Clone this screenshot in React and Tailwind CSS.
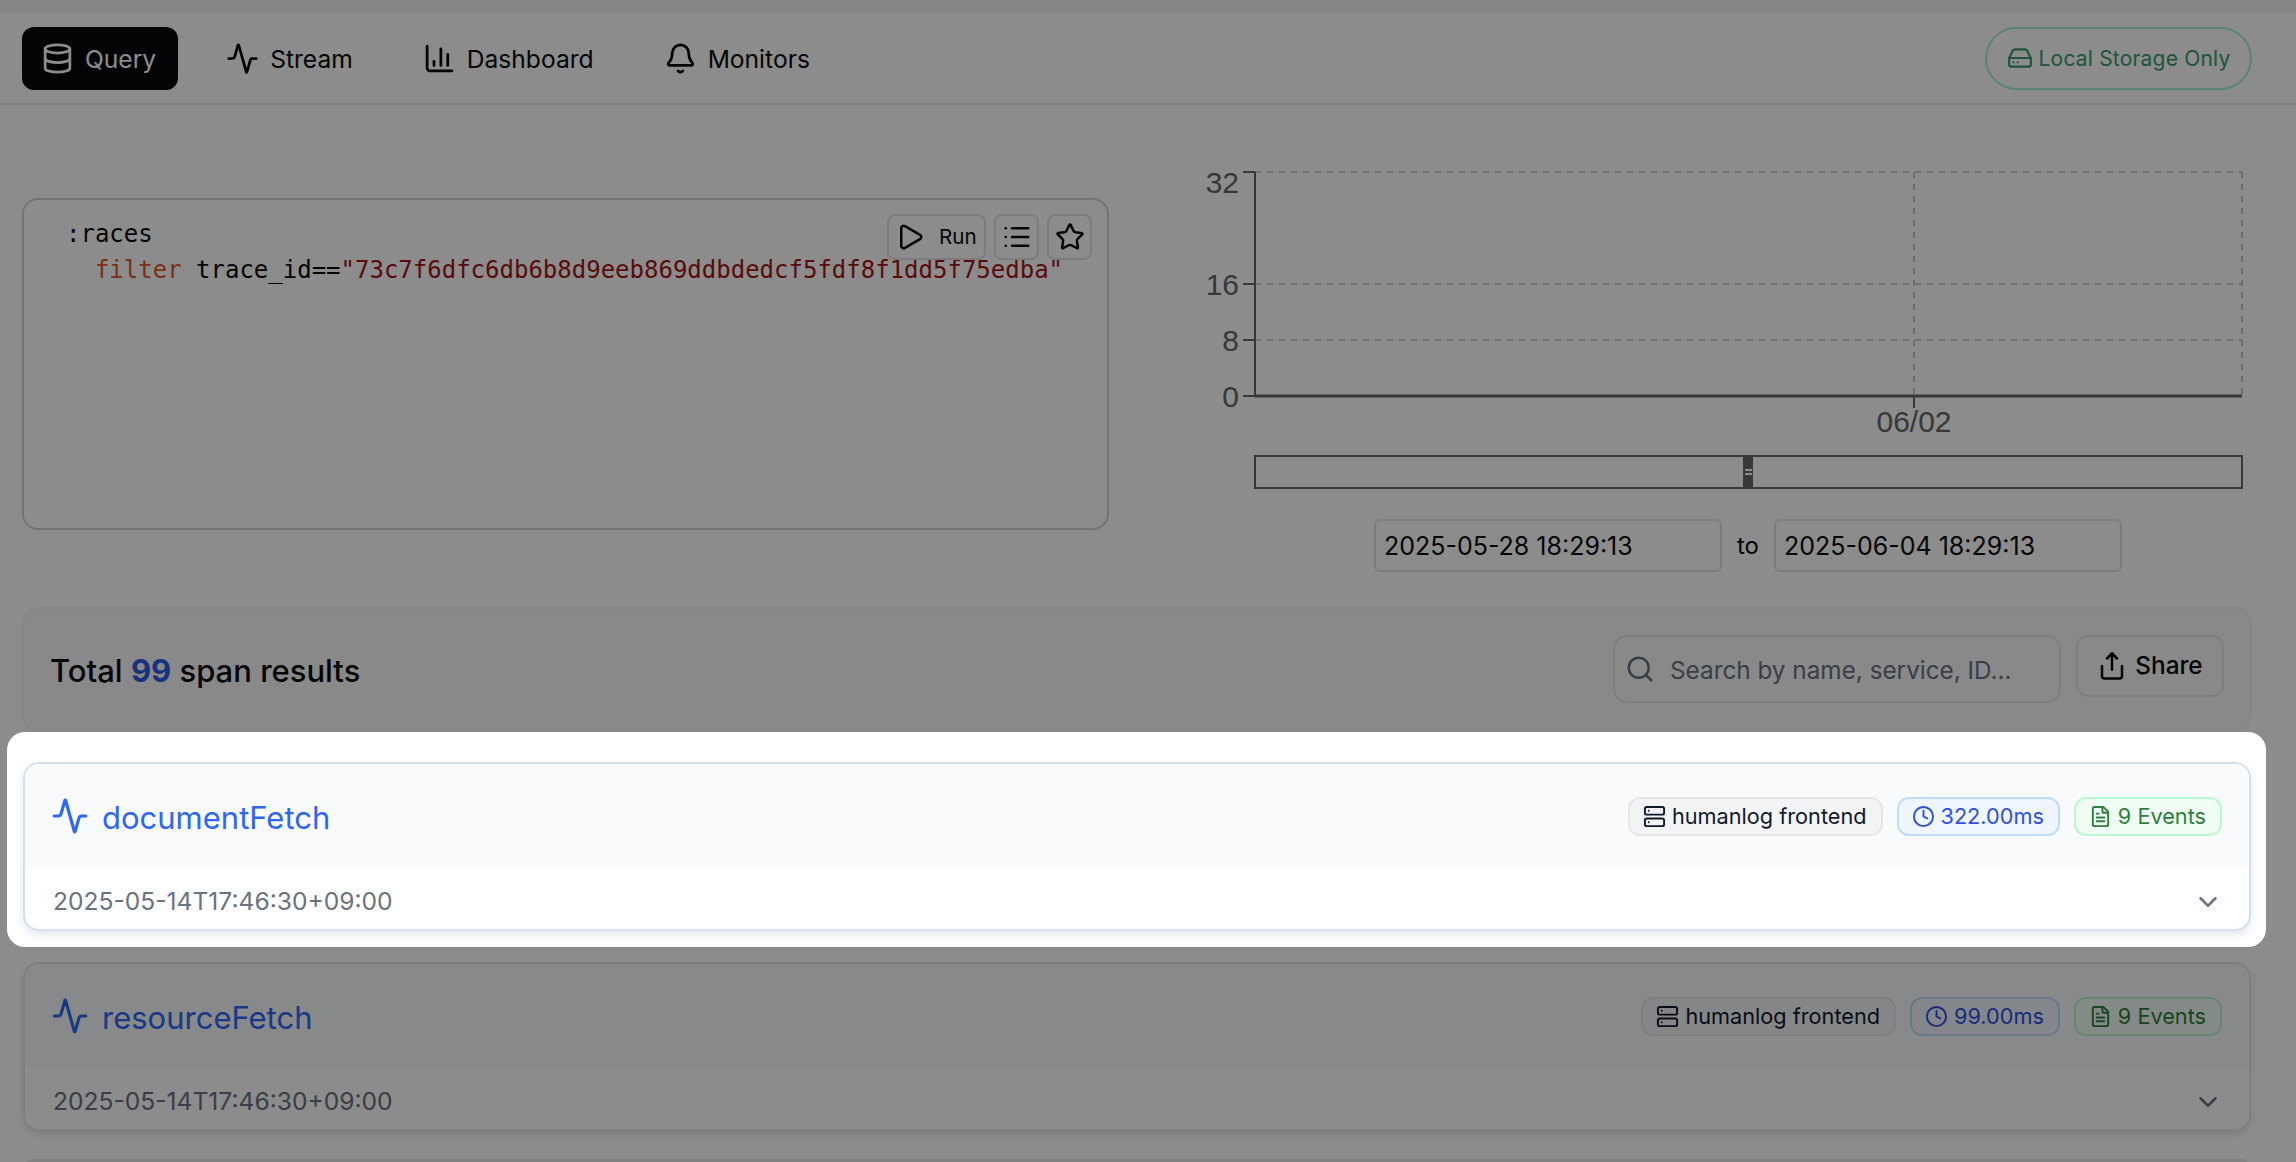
import React from 'react';
import {
  Activity, Bell, ChartColumn, ChevronDown, Clock, Database, FileText,
  HardDrive, List, Play, Search, Server, Share, Star
} from 'lucide-react';

const navItems = [
  { label: 'Query', icon: Database, active: true },
  { label: 'Stream', icon: Activity },
  { label: 'Dashboard', icon: ChartColumn },
  { label: 'Monitors', icon: Bell },
];

const Badge = ({ icon: Icon, className, children }) => (
  <span className={`flex h-[39px] items-center gap-[6px] rounded-[12px] border-2 pl-[13px] pr-[14px] text-[21.7px] ${className}`}>
    <Icon size={23} strokeWidth={2} />
    {children}
  </span>
);

const SpanCard = ({ name, duration, className = '' }) => (
  <div className={`overflow-hidden rounded-[16px] border-2 bg-white ${className}`}>
    <div className="flex h-[104px] items-center justify-between bg-[#f8fafc] pl-[26px] pr-[27px]">
      <div className="flex items-center gap-[13px] text-[#2f66f2]">
        <Activity size={38} strokeWidth={2} />
        <span className="pt-[2px] text-[31px] leading-none">{name}</span>
      </div>
      <div className="flex items-center gap-[14px]">
        <Badge icon={Server} className="border-[#e5e7eb] bg-[#f3f4f6] text-[#111827]">humanlog frontend</Badge>
        <Badge icon={Clock} className="border-[#bfdbfe] bg-[#eff6ff] text-[#2f4fe0]">{duration}</Badge>
        <Badge icon={FileText} className="border-[#bbf7d0] bg-[#f0fdf4] text-[#2f7d3c]">9 Events</Badge>
      </div>
    </div>
    <div className="flex h-[61px] items-center justify-between pl-[28px] pr-[26px] pt-[5px] text-[24.6px] text-[#6b7280]">
      <span>2025-05-14T17:46:30+09:00</span>
      <ChevronDown size={30} strokeWidth={2} className="mt-[2px]" />
    </div>
  </div>
);

const Chart = () => (
  <svg width="1096" height="342" viewBox="-10 0 1096 342" className="block font-['Liberation_Sans',sans-serif]">
    <g stroke="#cccccc" strokeWidth="2" strokeDasharray="6 6" fill="none">
      <line x1="45" y1="22" x2="1032" y2="22" />
      <line x1="45" y1="134" x2="1032" y2="134" />
      <line x1="45" y1="190" x2="1032" y2="190" />
      <line x1="704" y1="22" x2="704" y2="246" />
      <line x1="1032" y1="22" x2="1032" y2="246" />
    </g>
    <g stroke="#666666" strokeWidth="2" fill="none">
      <line x1="45" y1="22" x2="45" y2="246" />
      <line x1="45" y1="246" x2="1032" y2="246" strokeWidth="3" />
      <line x1="33" y1="22" x2="45" y2="22" />
      <line x1="33" y1="134" x2="45" y2="134" />
      <line x1="33" y1="190" x2="45" y2="190" />
      <line x1="33" y1="246" x2="45" y2="246" />
      <line x1="704" y1="246" x2="704" y2="258" />
    </g>
    <g fill="#666666" fontSize="30" textAnchor="end">
      <text x="29" y="43">32</text>
      <text x="29" y="145">16</text>
      <text x="29" y="201">8</text>
      <text x="29" y="257">0</text>
    </g>
    <text x="704" y="282" fill="#666666" fontSize="30" textAnchor="middle">06/02</text>
    <rect x="45" y="306" width="987" height="32" fill="none" stroke="#666666" strokeWidth="2" />
    <rect x="533" y="305" width="10" height="33" fill="#666666" />
    <line x1="535" y1="320" x2="542" y2="320" stroke="#ffffff" strokeWidth="2" />
    <line x1="535" y1="324" x2="542" y2="324" stroke="#ffffff" strokeWidth="2" />
  </svg>
);

const App = () => {
  return (
    <div className="relative h-[1162px] overflow-hidden bg-white font-['Inter',sans-serif] text-[#09090b]">
      {/* dimming layer behind the highlighted card */}
      <div className="absolute inset-0 z-10 bg-black/45" />

      <div className="h-[13px] bg-[#f2f2f2]" />
      <nav className="flex h-[92px] items-center justify-between border-b-2 border-[#e5e7eb] pl-[22px] pr-[44px]">
        <div className="flex items-center gap-[29px]">
          {navItems.map(item => {
            const Icon = item.icon;
            return (
              <div
                key={item.label}
                className={`flex h-[63px] items-center gap-[11px] rounded-[12px] pl-[19px] pr-[22px] text-[24.6px] ${
                  item.active ? 'bg-[#09090b] text-white' : 'text-[#09090b]'
                }`}
              >
                <Icon size={33} strokeWidth={2} />
                <span className="pt-[2px]">{item.label}</span>
              </div>
            );
          })}
        </div>
        <div className="flex h-[63px] w-[267px] items-center justify-center gap-[6px] rounded-full border-2 border-[#a7f3d0] text-[21px] tracking-[0.2px] text-[#379b6e]">
          <HardDrive size={26} strokeWidth={2} />
          <span className="pt-[2px]">Local Storage Only</span>
        </div>
      </nav>

      <div className="flex items-start pl-[22px]">
        <div className="relative mt-[93px] h-[332px] w-[1087px] rounded-[16px] border-2 border-[#d4d4d8] pl-[42px] pt-[16px] font-['DejaVu_Sans_Mono',monospace] text-[24px] leading-[36px]">
          <div className="whitespace-pre">:races</div>
          <div className="whitespace-pre">
            {'  '}<span className="text-[#e2592a]">filter</span> trace_id==<span className="text-[#a31515]">"73c7f6dfc6db6b8d9eeb869ddbdedcf5fdf8f1dd5f75edba"</span>
          </div>
          <div className="absolute left-[863px] top-[14px] flex gap-[8px] font-['Inter',sans-serif]">
            <div className="flex h-[46px] w-[99px] items-center gap-[14px] rounded-[8px] border-2 border-[#e4e4e7] pl-[6px] text-[20.6px]">
              <Play size={30} strokeWidth={2} />
              Run
            </div>
            <div className="flex h-[46px] w-[45px] items-center justify-center rounded-[8px] border-2 border-[#e4e4e7]">
              <List size={30} strokeWidth={2} />
            </div>
            <div className="flex h-[46px] w-[45px] items-center justify-center rounded-[8px] border-2 border-[#e4e4e7]">
              <Star size={30} strokeWidth={2} />
            </div>
          </div>
        </div>

        <div className="ml-[91px] mt-[45px] w-[1096px]">
          <Chart />
          <div className="ml-[174px] mt-[27px] flex items-center gap-[15px] text-[24px]">
            <div className="flex h-[53px] w-[348px] items-center rounded-[6px] border-2 border-[#e4e4e7] pl-[8px] pt-[3px] text-[25px]">2025-05-28 18:29:13</div>
            <span>to</span>
            <div className="flex h-[53px] w-[348px] items-center rounded-[6px] border-2 border-[#e4e4e7] pl-[8px] pt-[3px] text-[25px]">2025-06-04 18:29:13</div>
          </div>
        </div>
      </div>

      <div className="ml-[22px] mr-[44px] mt-[35px] flex h-[125px] items-center justify-between rounded-[16px] border-2 border-[#f3f4f6] bg-[#f9fafb] pl-[26px] pr-[26px] pt-[3px]">
        <div className="text-[31px] font-medium">
          Total <span className="font-bold text-[#2f5be8]">99</span> span results
        </div>
        <div className="-mt-[5px] flex items-start gap-[15px]">
          <div className="flex h-[68px] w-[448px] items-center gap-[15px] rounded-[14px] border-2 border-[#e5e7eb] pl-[10px] text-[24.3px] text-[#6b7280]">
            <Search size={30} strokeWidth={2} />
            <span className="pt-[3px]">Search by name, service, ID...</span>
          </div>
          <div className="flex h-[62px] w-[148px] items-center justify-center gap-[8px] rounded-[12px] border-2 border-[#e5e7eb] text-[24.3px] font-medium">
            <Share size={30} strokeWidth={2} />
            Share
          </div>
        </div>
      </div>

      <div className="relative z-20 ml-[7px] mr-[30px] rounded-[18px] bg-white pb-[16px] pl-[16px] pr-[15px] pt-[30px]">
        <SpanCard
          name="documentFetch"
          duration="322.00ms"
          className="border-[#d5dfef] shadow-[0_4px_8px_rgba(30,58,138,0.12)]"
        />
      </div>

      <div className="ml-[23px] mr-[45px] mt-[15px]">
        <SpanCard
          name="resourceFetch"
          duration="99.00ms"
          className="border-[#e5e7eb] shadow-[0_4px_6px_rgba(0,0,0,0.1)]"
        />
        <div className="mt-[28px] h-[10px] rounded-t-[16px] border-x-2 border-t-2 border-[#e5e7eb] bg-[#f8fafc]" />
      </div>
    </div>
  );
};

export default App;
